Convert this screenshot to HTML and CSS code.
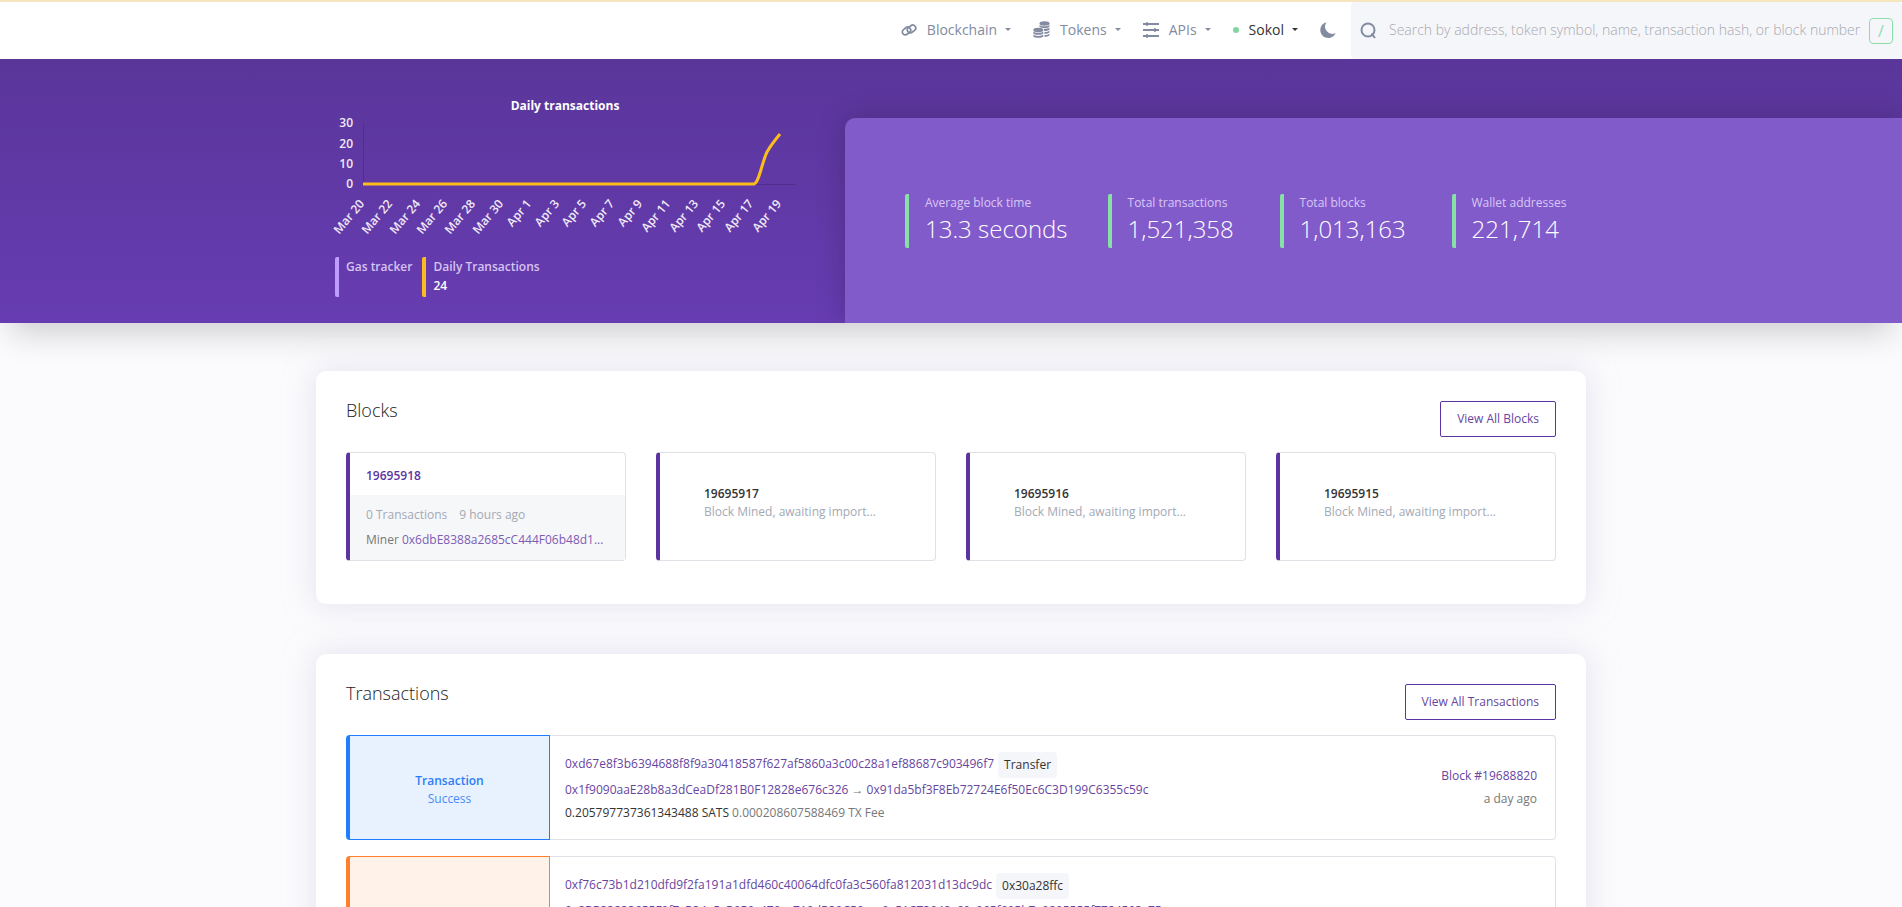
FILE: index.html
```html
<!DOCTYPE html>
<html lang="en">
<head>
    <meta charset="UTF-8">
    <meta name="viewport" content="width=device-width, initial-scale=1.0">
    <title>Sokol Explorer</title>
    <link rel="stylesheet" href="styles.css">
</head>
<body>
    <header class="navbar">
        <nav class="nav">
            <a href="#" class="nav-link">
                <svg class="icon" width="16" height="16" viewBox="0 0 16 16" fill="none" stroke="currentColor" stroke-width="1.7">
                    <rect x="1" y="6" width="9" height="6" rx="3" transform="rotate(-38 5.500 9)"/>
                    <rect x="6" y="4" width="9" height="6" rx="3" transform="rotate(-38 10.500 7)"/>
                </svg>
                <span>Blockchain</span>
                <i class="caret"></i>
            </a>
            <a href="#" class="nav-link">
                <svg class="icon" width="17" height="17" viewBox="0 0 17 17" fill="currentColor">
                    <ellipse cx="11.500" cy="2.500" rx="5" ry="2.200"/>
                    <path d="M6.500 4c1 1.800 9 1.800 10 0v1.600c-1 1.800-6 1.800-8 1.100L6.500 6z"/>
                    <path d="M11 8c2.500 0 4.500-.3 5.500-1.400v1.800c-1 1.300-3 1.500-5.500 1.500zM11.500 11c2.200 0 4-.4 5-1.500v1.800c-1 1.300-3 1.600-5 1.600zM11.500 14c2.200 0 4-.5 5-1.600v1.800c-1 1.300-3 1.700-5 1.700z"/>
                    <ellipse cx="5.300" cy="9" rx="5" ry="2.200"/>
                    <path d="M.3 10.500c1 1.800 9 1.800 10 0v2c-1 1.800-9 1.800-10 0zM.3 13.600c1 1.800 9 1.800 10 0v1.600c-1 2.200-9 2.200-10 0z"/>
                </svg>
                <span>Tokens</span>
                <i class="caret"></i>
            </a>
            <a href="#" class="nav-link">
                <svg class="icon" width="16" height="16" viewBox="0 0 16 16" fill="none" stroke="currentColor" stroke-width="2">
                    <path d="M0 2h16M0 8h16M0 14h16"/>
                    <path d="M4 0v4M12 6v4M4 12v4" stroke-width="1.500"/>
                </svg>
                <span>APIs</span>
                <i class="caret"></i>
            </a>
            <a href="#" class="nav-link network">
                <i class="dot"></i>
                <span>Sokol</span>
                <i class="caret"></i>
            </a>
            <button type="button" class="mode" aria-label="Dark mode">
                <svg width="16" height="16" viewBox="0 0 16 16" fill="currentColor">
                    <path d="M6.500.2A8 8 0 1 0 15.700 11 7.300 7.300 0 0 1 6.500.2z"/>
                </svg>
            </button>
        </nav>
        <form class="search">
            <svg width="17" height="17" viewBox="0 0 17 17" fill="none" stroke="currentColor" stroke-width="2">
                <circle cx="8" cy="8" r="6.500"/>
                <path d="M11.500 11.500L15 16"/>
            </svg>
            <input type="text" aria-label="Search" placeholder="Search by address, token symbol, name, transaction hash, or block number">
            <span class="slash">/</span>
        </form>
    </header>

    <section class="hero">
        <div class="hero-chart">
            <svg class="chart" width="470" height="150" viewBox="0 0 470 150">
                <text x="230" y="17" class="chart-title">Daily transactions</text>
                <g class="chart-y">
                    <text x="18" y="34">30</text>
                    <text x="18" y="55">20</text>
                    <text x="18" y="75">10</text>
                    <text x="18" y="95">0</text>
                </g>
                <path d="M28.500 30v62M28 91.500h433" class="chart-axis"/>
                <path d="M28 91h391c5-1 8-22 13-32 4-7 8-12 13-18" class="chart-line"/>
                <g class="chart-x" id="ticks"></g>
            </svg>
            <div class="legend">
                <div class="legend-item gas"><span>Gas tracker</span></div>
                <div class="legend-item daily"><span>Daily Transactions</span><b>24</b></div>
            </div>
        </div>
        <div class="stats">
            <div class="stat"><span>Average block time</span><strong>13.3 seconds</strong></div>
            <div class="stat"><span>Total transactions</span><strong>1,521,358</strong></div>
            <div class="stat"><span>Total blocks</span><strong>1,013,163</strong></div>
            <div class="stat"><span>Wallet addresses</span><strong>221,714</strong></div>
        </div>
    </section>

    <main class="container">
        <section class="card">
            <div class="card-head">
                <h2>Blocks</h2>
                <a href="#" class="btn">View All Blocks</a>
            </div>
            <div class="blocks">
                <div class="block">
                    <a href="#" class="block-number">19695918</a>
                    <div class="block-info">
                        <p class="muted"><span>0 Transactions</span><span>9 hours ago</span></p>
                        <p class="miner">Miner <a href="#">0x6dbE8388a2685cC444F06b48d1...</a></p>
                    </div>
                </div>
                <div class="block waiting"><b>19695917</b><span>Block Mined, awaiting import...</span></div>
                <div class="block waiting"><b>19695916</b><span>Block Mined, awaiting import...</span></div>
                <div class="block waiting"><b>19695915</b><span>Block Mined, awaiting import...</span></div>
            </div>
        </section>

        <section class="card">
            <div class="card-head">
                <h2>Transactions</h2>
                <a href="#" class="btn">View All Transactions</a>
            </div>
            <div class="tx">
                <div class="tx-type"><b>Transaction</b><span>Success</span></div>
                <div class="tx-body">
                    <div class="tx-hash"><a href="#">0xd67e8f3b6394688f8f9a30418587f627af5860a3c00c28a1ef88687c903496f7</a><span class="tag">Transfer</span></div>
                    <div><a href="#">0x1f9090aaE28b8a3dCeaDf281B0F12828e676c326</a> → <a href="#">0x91da5bf3F8Eb72724E6f50Ec6C3D199C6355c59c</a></div>
                    <div><span class="value">0.205797737361343488 SATS</span> 0.000208607588469 TX Fee</div>
                </div>
                <div class="tx-block"><a href="#">Block #19688820</a><span>a day ago</span></div>
            </div>
            <div class="tx call">
                <div class="tx-type"></div>
                <div class="tx-body">
                    <div class="tx-hash"><a href="#">0xf76c73b1d210dfd9f2fa191a1dfd460c40064dfc0fa3c560fa812031d13dc9dc</a><span class="tag">0x30a28ffc</span></div>
                    <div><a href="#">0x2BB33233655F0f7cB34e5cB059c479ce719dB39C59</a> → <a href="#">0x51C73948c69c965f695b7e9295555f7724503c75</a></div>
                </div>
            </div>
        </section>
    </main>
    <script>
        const labels = ["Mar 20", "Mar 22", "Mar 24", "Mar 26", "Mar 28", "Mar 30", "Apr 1", "Apr 3",
            "Apr 5", "Apr 7", "Apr 9", "Apr 11", "Apr 13", "Apr 15", "Apr 17", "Apr 19"];
        const ticks = document.getElementById("ticks");
        labels.forEach((label, i) => {
            const text = document.createElementNS("http://www.w3.org/2000/svg", "text");
            const x = 30 + Math.round(i * 27.8);
            text.setAttribute("transform", `translate(${x} 111) rotate(-50)`);
            text.textContent = label;
            ticks.appendChild(text);
        });
    </script>
</body>
</html>
```
FILE: styles.css
```css
* {
    box-sizing: border-box;
}

html {
    scrollbar-width: none;
}

body {
    margin: 0;
    font-family: "Open Sans", "Noto Sans", sans-serif;
    font-size: 12px;
    line-height: 18px;
    color: #333;
    background-color: #fbfbfd;
}

a {
    color: #5c34a2;
    text-decoration: none;
}

p {
    margin: 0;
}

.navbar {
    display: flex;
    justify-content: flex-end;
    height: 59px;
    border-top: 2px solid #f5e6bf;
    background-color: #fff;
}

.nav {
    display: flex;
    align-items: center;
    gap: 22px;
    padding: 0 15px 2px 0;
}

.nav-link {
    display: flex;
    align-items: center;
    font-size: 14px;
    color: #828ba0;
}

.nav-link .icon {
    margin-right: 10px;
}

.caret {
    margin-left: 8px;
    border: 3px solid transparent;
    border-top-color: currentColor;
    border-bottom: 0;
}

.network {
    color: #333;
}

.dot {
    width: 6px;
    height: 6px;
    margin-right: 10px;
    border-radius: 50%;
    background-color: #80d6a1;
}

.mode {
    display: flex;
    padding: 0;
    border: 0;
    background: none;
    color: #828ba0;
}

.search {
    display: flex;
    align-items: center;
    width: 551px;
    padding: 0 9px;
    border-radius: 4px;
    background-color: #f5f6fa;
    color: #828ba0;
}

.search input {
    flex: 1;
    min-width: 0;
    padding: 0 0 2px 12px;
    border: 0;
    outline: 0;
    background: none;
    font-family: inherit;
    font-size: 14px;
    font-weight: 300;
}

.search input::placeholder {
    color: #a9a9b0;
}

.slash {
    width: 24px;
    height: 26px;
    border: 1px solid #8be0aa;
    border-radius: 4px;
    color: #8be0aa;
    font-size: 16px;
    line-height: 24px;
    text-align: center;
}

.hero {
    display: flex;
    align-items: flex-end;
    height: 264px;
    padding-left: calc(50% - 616px);
    background-image: linear-gradient(to bottom, #5a369a, #673cb2);
    box-shadow: 0 20px 30px -10px rgba(0, 0, 0, 0.18);
}

.hero-chart {
    width: 510px;
    height: 100%;
    padding-top: 34px;
}

.chart {
    display: block;
    overflow: visible;
    font-size: 12px;
    font-weight: 600;
    fill: #f0eaf8;
}

.chart-title {
    font-weight: 700;
    fill: #fff;
    text-anchor: middle;
}

.chart-y,
.chart-x {
    text-anchor: end;
}

.chart-axis {
    fill: none;
    stroke: #4f2f8b;
}

.chart-line {
    fill: none;
    stroke: #fbbd1e;
    stroke-width: 3px;
}

.legend {
    display: flex;
    gap: 10px;
    padding-top: 14px;
}

.legend-item {
    display: flex;
    flex-direction: column;
    height: 40px;
    padding-left: 7px;
    border-left: 4px solid #bf9cff;
    border-radius: 2px;
    color: #d6c4f2;
    font-weight: 600;
    line-height: 19px;
}

.legend-item b {
    color: #fff;
    font-weight: 600;
}

.daily {
    border-color: #fbbd1e;
}

.stats {
    display: flex;
    flex: 1;
    align-items: center;
    gap: 40px;
    height: 205px;
    padding-left: 60px;
    border-top-left-radius: 10px;
    background-color: #825bcb;
    box-shadow: 0 0 30px rgba(0, 0, 0, 0.2);
    clip-path: inset(-60px 0 0 -60px);
}

.stat {
    display: flex;
    flex-direction: column;
    min-width: 132px;
    height: 54px;
    padding-left: 16px;
    border-left: 4px solid #87e0a5;
    border-radius: 2px;
    color: #d9c8f6;
}

.stat strong {
    color: #fff;
    font-size: 24px;
    font-weight: 300;
    line-height: 34px;
}

.container {
    max-width: 1270px;
    margin: 48px auto 0;
}

.card {
    margin-bottom: 50px;
    padding: 30px;
    border-radius: 10px;
    background-color: #fff;
    box-shadow: 0 0 30px rgba(202, 199, 226, 0.5);
}

.card-head {
    display: flex;
    justify-content: space-between;
    margin-bottom: 15px;
}

h2 {
    margin: 0;
    font-size: 18px;
    font-weight: 300;
    color: #222;
}

.btn {
    height: 36px;
    padding: 0 16px;
    border: 1px solid #5c34a2;
    border-radius: 2px;
    line-height: 34px;
}

.blocks {
    display: grid;
    grid-template-columns: repeat(4, 1fr);
    gap: 30px;
    margin-bottom: 13px;
}

.block {
    height: 109px;
    border: 1px solid #dee2e6;
    border-left: 4px solid #5c34a2;
    border-radius: 4px;
}

.block-number {
    display: block;
    height: 42px;
    padding-left: 16px;
    font-weight: 600;
    line-height: 46px;
}

.block-info {
    height: 65px;
    padding: 11px 16px;
    background-color: #f6f7f9;
    color: #777;
}

.muted {
    display: flex;
    gap: 12px;
    margin-bottom: 7px;
    color: #a3a9b5;
}

.miner {
    white-space: nowrap;
}

.miner a {
    color: #7d5cb6;
}

.waiting {
    display: flex;
    flex-direction: column;
    justify-content: center;
    padding: 0 0 8px 44px;
    color: #a3a9b5;
}

.waiting b {
    color: #333;
    font-weight: 600;
}

.tx {
    display: flex;
    height: 105px;
    margin-bottom: 16px;
    border: 1px solid #dee2e6;
    border-left: 0;
    border-radius: 4px;
}

.tx-type {
    display: flex;
    flex-direction: column;
    align-items: center;
    justify-content: center;
    width: 204px;
    margin: -1px 0;
    padding-top: 5px;
    border: 1px solid #1f7dff;
    border-left-width: 4px;
    border-radius: 4px 0 0 4px;
    background-color: #e8f2ff;
    color: #4a8bf5;
}

.tx-type b {
    color: #2b7cf6;
    font-weight: 600;
}

.call .tx-type {
    border-color: #ff7f2a;
    background-color: #fff2e9;
}

.tx-body {
    flex: 1;
    padding: 16px 15px;
    color: #777;
    line-height: 23px;
}

.tx-hash {
    display: flex;
}

.tx-body a,
.tx-block a,
.btn {
    color: #67459f;
}

.tag {
    height: 26px;
    margin-left: 4px;
    padding: 0 6px;
    border-radius: 4px;
    background-color: #f5f6fa;
    color: #333;
    line-height: 26px;
}

.value {
    color: #333;
}

.tx-block {
    display: flex;
    flex-direction: column;
    padding: 28px 18px 0 0;
    color: #777;
    line-height: 23px;
    text-align: right;
}
```
